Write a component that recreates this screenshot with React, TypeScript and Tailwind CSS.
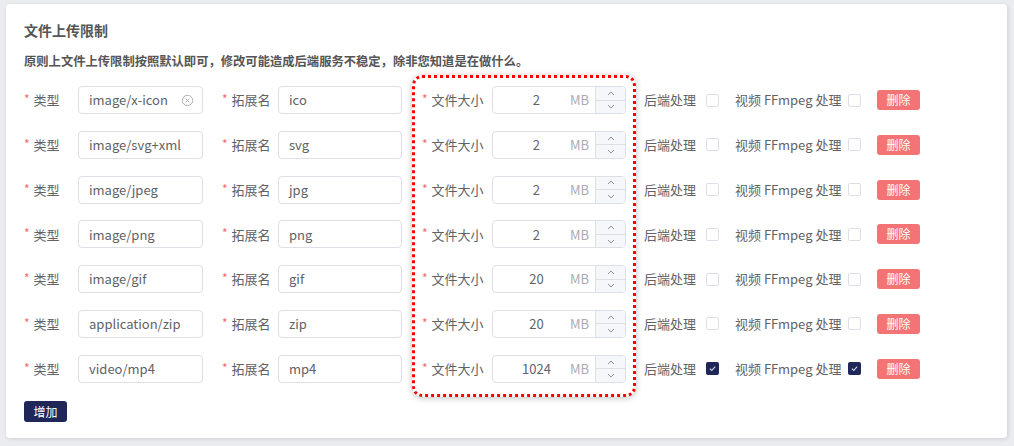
import React from "react";

type Row = { type: string; ext: string; size: string; checked: boolean; clear?: boolean };

const rows: Row[] = [
  { type: "image/x-icon", ext: "ico", size: "2", checked: false, clear: true },
  { type: "image/svg+xml", ext: "svg", size: "2", checked: false },
  { type: "image/jpeg", ext: "jpg", size: "2", checked: false },
  { type: "image/png", ext: "png", size: "2", checked: false },
  { type: "image/gif", ext: "gif", size: "20", checked: false },
  { type: "application/zip", ext: "zip", size: "20", checked: false },
  { type: "video/mp4", ext: "mp4", size: "1024", checked: true },
];

function Label({ text, width }: { text: string; width: string }) {
  return (
    <div className={`${width} shrink-0 flex items-center text-[13px] text-[#606266] whitespace-nowrap`}>
      <span className="text-[#f56c6c] mr-[4px] text-[12px] leading-none relative top-[-1px]">*</span>
      <span>{text}</span>
    </div>
  );
}

function Checkbox({ checked }: { checked: boolean }) {
  if (checked) {
    return (
      <div className="w-[13px] h-[13px] rounded-[2px] bg-[#1e2757] flex items-center justify-center shrink-0">
        <svg width="9" height="9" viewBox="0 0 10 10">
          <path d="M2 5.2 L4.2 7.2 L8 3" fill="none" stroke="#c9cde0" strokeWidth="1.3" />
        </svg>
      </div>
    );
  }
  return <div className="w-[13px] h-[13px] rounded-[2px] border border-[#dcdfe6] bg-white shrink-0" />;
}

export default function App() {
  return (
    <div
      className="w-[1014px] h-[446px] bg-[#ebecf0] pt-[4px] pl-[6px]"
      style={{ fontFamily: '"Noto Sans CJK SC", "Noto Sans", sans-serif' }}
    >
      <div className="relative w-[1001px] h-[434px] bg-white rounded-[4px] shadow-[1px_1px_4px_rgba(0,0,0,0.12)] pl-[18px] pt-[16px] flex flex-col">
        <div className="h-[20px] leading-[20px] text-[14px] font-bold text-[#555]">文件上传限制</div>
        <div className="mt-[11px] h-[20px] leading-[20px] text-[12.3px] font-bold text-[#555] whitespace-nowrap">
          原则上文件上传限制按照默认即可，修改可能造成后端服务不稳定，除非您知道是在做什么。
        </div>
        <div className="mt-[15px] flex flex-col gap-[16.8px]">
          {rows.map((r, i) => (
            <div key={i} className="h-[28px] flex items-center">
              <Label text="类型" width="w-[54px]" />
              <div className="w-[125px] h-[28px] border border-[#dcdfe6] rounded-[4px] flex items-center pl-[10px] pr-[8px] text-[13px] text-[#606266] whitespace-nowrap">
                <span className="flex-1">{r.type}</span>
                {r.clear && (
                  <svg width="13" height="13" viewBox="0 0 14 14">
                    <circle cx="7" cy="7" r="5.6" fill="none" stroke="#a8abb2" strokeWidth="1" />
                    <path d="M5 5 L9 9 M9 5 L5 9" stroke="#a8abb2" strokeWidth="1" />
                  </svg>
                )}
              </div>
              <div className="w-[19px] shrink-0" />
              <Label text="拓展名" width="w-[56px]" />
              <div className="w-[124px] h-[28px] border border-[#dcdfe6] rounded-[4px] flex items-center pl-[10px] text-[13px] text-[#606266]">
                {r.ext}
              </div>
              <div className="w-[20px] shrink-0" />
              <Label text="文件大小" width="w-[70px]" />
              <div className="w-[134px] h-[28px] border border-[#dcdfe6] rounded-[4px] flex items-stretch text-[13px] overflow-hidden">
                <div className="flex-1 flex items-center pl-[10px]">
                  <span className="flex-1 text-center text-[#606266]">{r.size}</span>
                  <span className="text-[#a8abb2] pr-[6px]">MB</span>
                </div>
                <div className="w-[30px] border-l border-[#dcdfe6] bg-[#f5f7fa] flex flex-col">
                  <div className="flex-1 flex items-center justify-center border-b border-[#dcdfe6]">
                    <svg width="8" height="5" viewBox="0 0 8 5">
                      <path d="M1 4 L4 1 L7 4" fill="none" stroke="#909399" strokeWidth="1" />
                    </svg>
                  </div>
                  <div className="flex-1 flex items-center justify-center">
                    <svg width="8" height="5" viewBox="0 0 8 5">
                      <path d="M1 1 L4 4 L7 1" fill="none" stroke="#909399" strokeWidth="1" />
                    </svg>
                  </div>
                </div>
              </div>
              <div className="w-[18px] shrink-0" />
              <span className="text-[13px] text-[#606266] w-[52px] whitespace-nowrap">后端处理</span>
              <div className="w-[10px] shrink-0" />
              <Checkbox checked={r.checked} />
              <div className="w-[16px] shrink-0" />
              <span className="text-[13px] text-[#606266] w-[103px] whitespace-nowrap">视频 FFmpeg 处理</span>
              <div className="w-[10px] shrink-0" />
              <Checkbox checked={r.checked} />
              <div className="w-[16px] shrink-0" />
              <button className="w-[43px] h-[20px] rounded-[3px] bg-[#f47375] text-white text-[12px] leading-[20px] text-center">
                删除
              </button>
            </div>
          ))}
        </div>
        <div className="mt-[15px]">
          <button className="w-[43px] h-[21px] rounded-[3px] bg-[#1e2757] text-white text-[12px] leading-[21px] text-center">
            增加
          </button>
        </div>
        <div className="absolute left-[406px] top-[71px] w-[224px] h-[322px] border-[3px] border-dotted border-[#ff0000] rounded-[10px] shadow-[0_1px_6px_rgba(0,0,0,0.25)] pointer-events-none" />
      </div>
    </div>
  );
}
